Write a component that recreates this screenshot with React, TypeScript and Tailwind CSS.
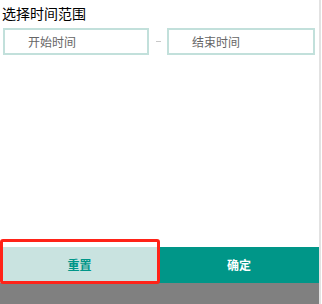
import React from "react";

export default function App() {
  return (
    <div
      className="w-[322px] h-[304px] flex bg-white overflow-hidden"
      style={{ fontFamily: '"Noto Sans CJK SC", "Noto Sans", sans-serif' }}
    >
      <div className="relative w-[319px] h-full flex flex-col bg-white">
        <div className="pl-[2px] pt-[4px] h-[28px] text-[14px] leading-[18px] text-black">
          选择时间范围
        </div>
        <div className="flex items-center h-[27px] pl-[3px]">
          <div className="w-[146px] h-[27px] border-2 border-[#c2e0db] flex items-center pl-[23px] text-[12px] text-[#666666]">
            开始时间
          </div>
          <div className="w-[18px] flex justify-center items-center">
            <div className="w-[5px] h-[1px] bg-[#c8c8c8]" />
          </div>
          <div className="w-[148px] h-[27px] border-2 border-[#c2e0db] flex items-center pl-[23px] text-[12px] text-[#666666]">
            结束时间
          </div>
        </div>
        <div className="flex-1" />
        <div className="flex h-[36px]">
          <div className="w-[159px] h-full bg-[#c9e3e0] flex items-center justify-center text-[12px] font-bold text-[#009688]">
            重置
          </div>
          <div className="flex-1 h-full bg-[#009688] flex items-center justify-center text-[12px] font-bold text-white">
            确定
          </div>
        </div>
        <div className="h-[21px] bg-[#808080]" />
        <div className="absolute left-0 top-[239px] w-[160px] h-[45px] border-[3px] border-[#ff2318] rounded-[3px]" />
      </div>
      <div className="w-[2px] h-full bg-[#e2e2e2]" />
      <div className="flex-1 h-full bg-white" />
    </div>
  );
}
